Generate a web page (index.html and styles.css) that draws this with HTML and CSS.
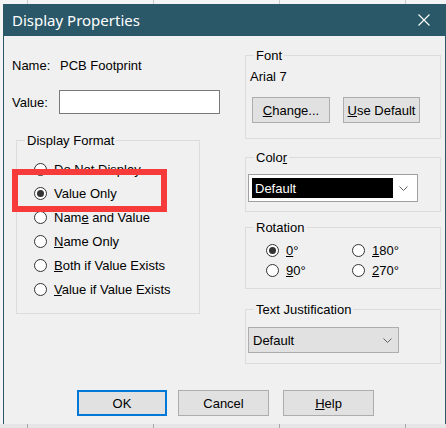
FILE: index.html
```html
<!DOCTYPE html>
<html>
<head>
<meta charset="utf-8">
<link rel="stylesheet" href="styles.css">
</head>
<body>
<div class="screen">
  <div class="strip strip-top">
    <span class="cell c1"></span><span class="cell"></span><span class="cell"></span><span class="cell"></span><span class="cell last"></span>
  </div>
  <div class="middle">
    <div class="edge"></div>
    <div class="dialog">
      <div class="titlebar">
        <span class="title">Display Properties</span>
        <svg class="close" width="12" height="12" viewBox="0 0 12 12"><path d="M0.5 0.5 L11.5 11.5 M11.5 0.5 L0.5 11.5" stroke="#ffffff" stroke-width="1.1" fill="none"/></svg>
      </div>
      <div class="body">
        <div class="columns">
          <div class="leftcol">
            <div class="name-row"><span class="lbl-name">Name:</span><span>PCB Footprint</span></div>
            <div class="value-row"><span class="lbl-value">Value:</span><div class="textbox"></div></div>
            <fieldset class="group group-format">
              <legend>Display Format</legend>
              <div class="radio-list">
                <div class="radio-row"><span class="radio"></span><span>Do Not Display</span></div>
                <div class="radio-row"><span class="radio checked"></span><span>Value Only</span></div>
                <div class="radio-row"><span class="radio"></span><span>Nam<u>e</u> and Value</span></div>
                <div class="radio-row"><span class="radio"></span><span><u>N</u>ame Only</span></div>
                <div class="radio-row"><span class="radio"></span><span><u>B</u>oth if Value Exists</span></div>
                <div class="radio-row"><span class="radio"></span><span><u>V</u>alue if Value Exists</span></div>
              </div>
            </fieldset>
          </div>
          <div class="rightcol">
            <fieldset class="group group-font">
              <legend>Font</legend>
              <div class="font-body">
                <div class="font-name">Arial 7</div>
                <div class="font-buttons">
                  <div class="btn btn-change"><u>C</u>hange...</div>
                  <div class="btn btn-default"><u>U</u>se Default</div>
                </div>
              </div>
            </fieldset>
            <fieldset class="group group-color">
              <legend>Colo<u>r</u></legend>
              <div class="combo">
                <div class="combo-value">Default</div>
                <div class="combo-arrow"><svg width="9" height="5" viewBox="0 0 9 5"><path d="M0.5 0.5 L4.5 4.5 L8.5 0.5" stroke="#606060" stroke-width="1" fill="none"/></svg></div>
              </div>
            </fieldset>
            <fieldset class="group group-rotation">
              <legend>Rotation</legend>
              <div class="rot-grid">
                <div class="radio-row small"><span class="radio checked"></span><span><u>0</u>°</span></div>
                <div class="radio-row small"><span class="radio"></span><span><u>1</u>80°</span></div>
                <div class="radio-row small"><span class="radio"></span><span><u>9</u>0°</span></div>
                <div class="radio-row small"><span class="radio"></span><span><u>2</u>70°</span></div>
              </div>
            </fieldset>
            <fieldset class="group group-just">
              <legend>Text Justification</legend>
              <div class="dropdown">
                <span>Default</span>
                <svg width="9" height="5" viewBox="0 0 9 5"><path d="M0.5 0.5 L4.5 4.5 L8.5 0.5" stroke="#606060" stroke-width="1" fill="none"/></svg>
              </div>
            </fieldset>
          </div>
        </div>
        <div class="buttons">
          <div class="btn btn-ok">OK</div>
          <div class="btn btn-cancel">Cancel</div>
          <div class="btn btn-help"><u>H</u>elp</div>
        </div>
      </div>
    </div>
  </div>
  <div class="strip strip-bottom">
    <span class="cell c1"></span><span class="cell"></span><span class="cell"></span><span class="cell"></span><span class="cell last"></span>
  </div>
  <div class="highlight"></div>
</div>
</body>
</html>
```

FILE: styles.css
```css
* { box-sizing: border-box; }
html, body { margin: 0; padding: 0; }
body {
  width: 446px;
  height: 428px;
  overflow: hidden;
  background: #f0f0f0;
  font-family: "Liberation Sans", Arial, sans-serif;
  font-size: 13px;
  line-height: 15px;
  color: #000;
}
.screen {
  position: relative;
  width: 446px;
  height: 428px;
  display: flex;
  flex-direction: column;
}
.strip {
  display: flex;
  height: 4px;
  background: #f4f4f4;
}
.strip-bottom { background: #e6e6e6; }
.strip .cell { width: 126px; height: 100%; border-left: 1px solid #c9c9c9; }
.strip-bottom .cell { border-left-color: #a8a8a8; }
.strip .c1 { width: 27px; border-left: none; }
.strip .last { flex: 1; }
.middle {
  display: flex;
  height: 420px;
}
.edge {
  width: 3px;
  background: #f4f4f4;
}
.dialog {
  width: 443px;
  height: 420px;
  background: #f0f0f0;
  border-left: 1px solid #2b5868;
  border-right: 1px solid #2b5868;
  display: flex;
  flex-direction: column;
}
.titlebar {
  height: 32px;
  margin: 0 -1px;
  background: #2b5868;
  display: flex;
  align-items: center;
  justify-content: space-between;
  padding: 0 16px 0 9px;
}
.title {
  font-family: "Noto Sans", "Open Sans", sans-serif;
  font-size: 15px;
  color: #ffffff;
  line-height: 20px;
  margin-top: -1px;
}
.close { display: block; margin-top: -1px; }
.body {
  flex: 1;
  display: flex;
  flex-direction: column;
}
.columns {
  display: flex;
  height: 328px;
}
.leftcol {
  width: 241px;
  padding: 22px 0 0 8px;
}
.name-row { display: flex; height: 15px; }
.lbl-name { width: 48px; }
.value-row {
  display: flex;
  align-items: center;
  margin-top: 17px;
  height: 24px;
}
.lbl-value { width: 47px; }
.textbox {
  width: 161px;
  height: 24px;
  background: #fff;
  border: 1px solid #7a7a7a;
}
fieldset.group {
  margin: 0;
  padding: 0;
  border: 1px solid #dcdcdc;
  min-width: 0;
}
fieldset.group legend {
  margin-left: 8px;
  padding: 0 2px;
  line-height: 15px;
  height: 15px;
}
.group-format {
  margin: 19px 0 0 4px !important;
  width: 184px;
  height: 181px;
}
.radio-list { padding: 9px 0 0 17px; }
.radio-row {
  display: flex;
  align-items: center;
  height: 24px;
}
.radio-row.small { height: 20px; }
.radio {
  width: 13px;
  height: 13px;
  border: 1px solid #333;
  border-radius: 50%;
  background: #fff;
  margin-right: 7px;
  flex: none;
  display: flex;
  align-items: center;
  justify-content: center;
}
.radio.checked::after {
  content: "";
  width: 7px;
  height: 7px;
  border-radius: 50%;
  background: #333;
}
.rightcol {
  width: 196px;
  padding-top: 12px;
}
.group-font { height: 91px; }
.font-body { padding: 6px 0 0 4px; }
.font-name { height: 15px; }
.font-buttons {
  display: flex;
  gap: 13px;
  margin-top: 13px;
  padding-left: 2px;
}
.btn {
  height: 26px;
  background: #e1e1e1;
  border: 1px solid #adadad;
  display: flex;
  align-items: center;
  justify-content: center;
}
.btn-change { width: 78px; }
.btn-default { width: 77px; }
.group-color { margin-top: 11px !important; height: 62px; }
.combo {
  margin: 9px 0 0 2px;
  width: 170px;
  height: 28px;
  background: #fff;
  border: 1px solid #a0a0a0;
  padding: 3px;
  display: flex;
}
.combo-value {
  width: 141px;
  height: 20px;
  background: #000;
  color: #fff;
  padding-left: 3px;
  display: flex;
  align-items: center;
}
.combo-arrow {
  flex: 1;
  display: flex;
  align-items: center;
  justify-content: center;
}
.combo-arrow svg, .dropdown svg { display: block; }
.group-rotation { margin-top: 8px !important; height: 69px; }
.rot-grid {
  display: grid;
  grid-template-columns: 86px 1fr;
  padding: 5px 0 0 20px;
}
.group-just { margin-top: 13px !important; height: 62px; }
.dropdown {
  margin: 10px 0 0 2px;
  width: 151px;
  height: 26px;
  background: #e1e1e1;
  border: 1px solid #adadad;
  display: flex;
  align-items: center;
  justify-content: space-between;
  padding: 0 6px 0 4px;
}
.buttons {
  display: flex;
  margin-top: 26px;
  padding-left: 73px;
}
.btn-ok { width: 90px; border: 2px solid #0078d7; }
.btn-cancel { width: 91px; margin-left: 11px; }
.btn-help { width: 91px; margin-left: 14px; }
.highlight {
  position: absolute;
  left: 12px;
  top: 169px;
  width: 155px;
  height: 43px;
  border: 6px solid #f73b3b;
}
```
